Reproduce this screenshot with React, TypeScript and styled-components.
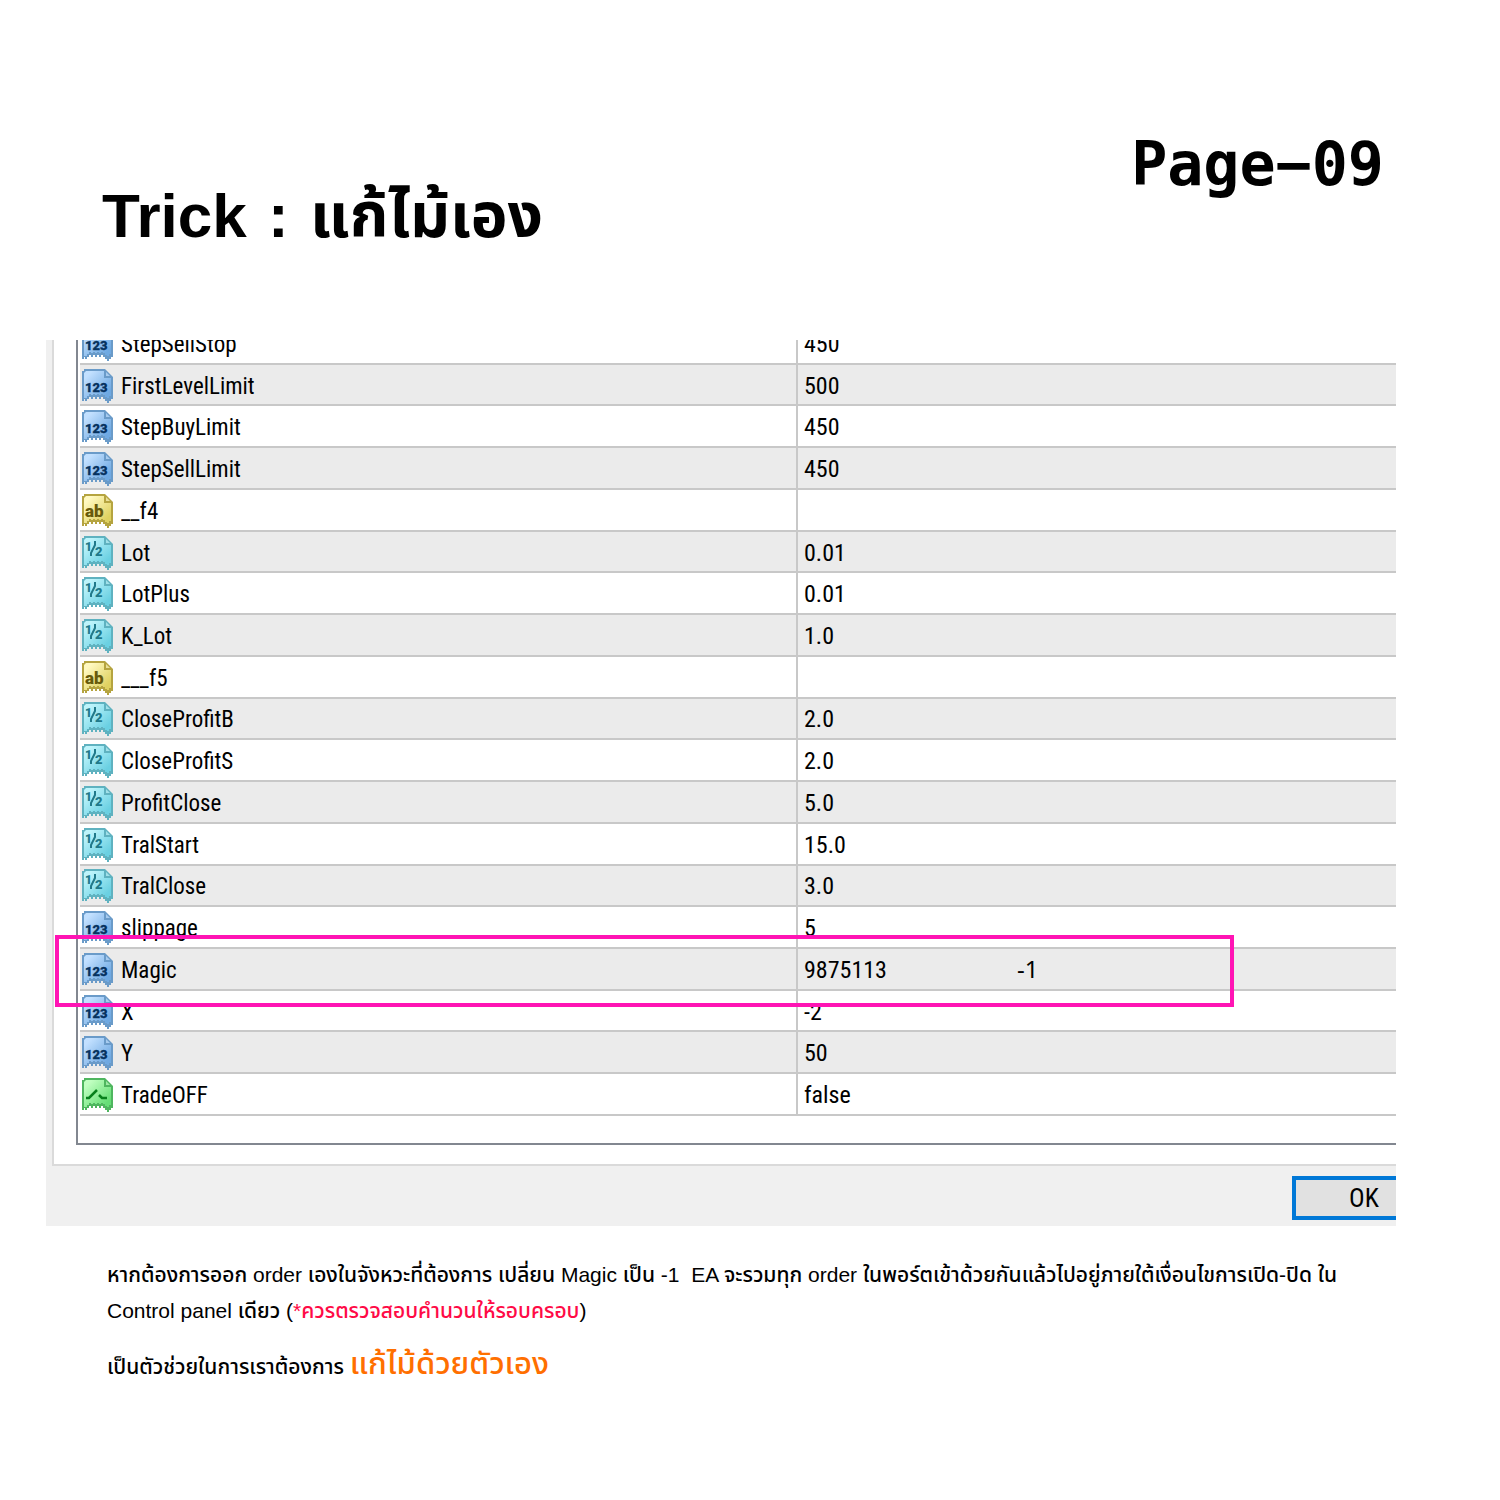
import React from "react";
import styled, { createGlobalStyle } from "styled-components";

const GlobalStyle = createGlobalStyle`
  * { box-sizing: border-box; }
  body {
    margin: 0;
    background: #fff;
    color: #000;
    font-family: "Liberation Sans", "Noto Sans Thai", sans-serif;
  }
`;

const Page = styled.main`
  padding: 120px 104px 96px 46px;
`;

const Header = styled.header`
  display: flex;
  justify-content: space-between;
  align-items: flex-start;
  height: 220px;
  padding: 0 12px 0 56px;
`;

const Title = styled.h1`
  margin: 60px 0 0;
  font-size: 62px;
  line-height: 72px;
  font-weight: 700;
`;

const Colon = styled.span`
  margin: 0 4px;
`;

const PageNumber = styled.p`
  margin: 8px 0 0;
  font-family: "DejaVu Sans Mono", monospace;
  font-size: 60px;
  line-height: 72px;
  font-weight: 700;
`;

const Dialog = styled.section`
  position: relative;
  overflow: hidden;
  background: #f0f0f0;
  padding-left: 6px;
  font-family: "Roboto Condensed", Roboto, sans-serif;
`;

const TabPane = styled.div`
  padding: 0 0 19px 22px;
  background: #fff;
  border-left: 2px solid #dadada;
  border-bottom: 2px solid #dadada;
`;

const ListBox = styled.div`
  overflow: hidden;
  padding: 0 0 27px 2px;
  border-left: 2px solid #828790;
  border-bottom: 2px solid #828790;
`;

const Table = styled.table`
  width: 100%;
  height: 793px;
  margin-top: -17px;
  border-collapse: separate;
  border-spacing: 0;
  table-layout: fixed;
`;

const NameColumn = styled.col`
  width: 718px;
`;

const Row = styled.tr`
  &:nth-child(even) { background: #ebebeb; }
`;

const cellBorder = "2px solid #c8c8c8";

const NameCell = styled.th`
  padding: 2px 0 0 2px;
  border-bottom: ${cellBorder};
  border-right: ${cellBorder};
  font-size: 23px;
  line-height: 32px;
  font-weight: 400;
  text-align: left;
`;

const NameContent = styled.div`
  display: flex;
  align-items: center;
  gap: 8px;
`;

const Name = styled.span`
  padding-top: 2px;
`;

const ValueCell = styled.td`
  padding: 2px 0 0 6px;
  border-bottom: ${cellBorder};
  font-size: 24px;
  line-height: 32px;
`;

const Note = styled.span`
  margin-left: 130px;
  font-family: "Noto Sans", sans-serif;
`;

const Footer = styled.div`
  display: flex;
  justify-content: flex-end;
  padding: 10px 0 6px;
`;

const OkButton = styled.button`
  width: 144px;
  height: 44px;
  margin-right: -40px;
  padding: 0;
  border: 4px solid #0078d7;
  background: #e1e1e1;
  color: #000;
  font-family: inherit;
  font-size: 26px;
  line-height: 32px;
`;

const Highlight = styled.div`
  position: absolute;
  top: 595px;
  left: 9px;
  right: 162px;
  height: 72px;
  border: 4px solid #ff14b4;
  pointer-events: none;
`;

const IconSvg = styled.svg`
  flex: none;
  display: block;
  width: 31px;
  height: 34px;
`;

const Description = styled.div`
  padding: 31px 0 0 61px;
  font-size: 21px;
  line-height: 36px;
  font-weight: 500;
`;

const Paragraph = styled.p`
  margin: 0 0 17px;
`;

const Warning = styled.span`
  color: #ff0a46;
`;

const Emphasis = styled.span`
  color: #ff6f00;
  font-size: 31px;
`;

type Kind = "int" | "string" | "double" | "bool";

const palette: Record<Kind, { light: string; dark: string; edge: string; ink: string }> = {
  int: { light: "#c2e0ff", dark: "#6fa9e2", edge: "#6a9bc9", ink: "#06325f" },
  string: { light: "#fff9c0", dark: "#dfd160", edge: "#b5a440", ink: "#675a0c" },
  double: { light: "#bdf4fb", dark: "#6ad0e2", edge: "#5fb2c0", ink: "#20798a" },
  bool: { light: "#c0ffc0", dark: "#66de76", edge: "#4fb65f", ink: "#08801c" },
};

const IconText = styled.text`
  font-family: Roboto, sans-serif;
  font-weight: 900;
`;

function Mark({ kind, ink }: { kind: Kind; ink: string }) {
  if (kind === "int") return <IconText x="3" y="23" fontSize="13" fill={ink} stroke={ink} strokeWidth="0.3">123</IconText>;
  if (kind === "string") return <IconText x="3" y="23" fontSize="17" fill={ink}>ab</IconText>;
  if (kind === "double")
    return (
      <>
        <IconText x="3" y="15" fontSize="12" fill={ink}>1</IconText>
        <path d="M9 20V17L13 9V5" fill="none" stroke={ink} strokeWidth="2" />
        <IconText x="13" y="20" fontSize="13" fill={ink}>2</IconText>
      </>
    );
  return <path d="M4 20H7L15 12M17 17L20 20H25" fill="none" stroke={ink} strokeWidth="2.5" />;
}

function TypeIcon({ kind }: { kind: Kind }) {
  const c = palette[kind];
  const id = "fill-" + kind;
  return (
    <IconSvg viewBox="0 0 31 34" aria-hidden="true">
      <defs>
        <linearGradient id={id} x1="0" y1="0" x2="1" y2="1">
          <stop offset="0.15" stopColor={c.light} />
          <stop offset="0.85" stopColor={c.dark} />
        </linearGradient>
      </defs>
      <path
        d="M0 2H2V0H23L31 8V30H29V32H27V34H25V32H23V30H21V28H19V30H17V28H15V30H13V28H11V30H9V28H7V30H5V32H3V30H2V32H0Z"
        fill={c.edge}
      />
      <path
        d="M2 4L4 2H22V9H29V27H27V29H25V28H23V26H21V25H19V26H17V25H15V26H13V25H11V26H9V25H7V27H5V29H2Z"
        fill={`url(#${id})`}
      />
      <path d="M24 3L28 7H24Z" fill={c.light} fillOpacity="0.7" />
      <Mark kind={kind} ink={c.ink} />
    </IconSvg>
  );
}

interface Param {
  kind: Kind;
  name: string;
  value: string;
  note?: string;
}

const params: Param[] = [
  { kind: "int", name: "StepSellStop", value: "450" },
  { kind: "int", name: "FirstLevelLimit", value: "500" },
  { kind: "int", name: "StepBuyLimit", value: "450" },
  { kind: "int", name: "StepSellLimit", value: "450" },
  { kind: "string", name: "__f4", value: "" },
  { kind: "double", name: "Lot", value: "0.01" },
  { kind: "double", name: "LotPlus", value: "0.01" },
  { kind: "double", name: "K_Lot", value: "1.0" },
  { kind: "string", name: "___f5", value: "" },
  { kind: "double", name: "CloseProfitB", value: "2.0" },
  { kind: "double", name: "CloseProfitS", value: "2.0" },
  { kind: "double", name: "ProfitClose", value: "5.0" },
  { kind: "double", name: "TralStart", value: "15.0" },
  { kind: "double", name: "TralClose", value: "3.0" },
  { kind: "int", name: "slippage", value: "5" },
  { kind: "int", name: "Magic", value: "9875113", note: "-1" },
  { kind: "int", name: "X", value: "-2" },
  { kind: "int", name: "Y", value: "50" },
  { kind: "bool", name: "TradeOFF", value: "false" },
];

export default function App() {
  return (
    <>
      <GlobalStyle />
      <Page>
        <Header>
          <Title>
            Trick <Colon>:</Colon> แก้ไม้เอง
          </Title>
          <PageNumber>Page−09</PageNumber>
        </Header>

        <Dialog>
          <TabPane>
            <ListBox>
              <Table>
                <colgroup>
                  <NameColumn />
                  <col />
                </colgroup>
                <tbody>
                  {params.map((p) => (
                    <Row key={p.name}>
                      <NameCell scope="row">
                        <NameContent>
                          <TypeIcon kind={p.kind} />
                          <Name>{p.name}</Name>
                        </NameContent>
                      </NameCell>
                      <ValueCell>
                        {p.value}
                        {p.note && <Note>{p.note}</Note>}
                      </ValueCell>
                    </Row>
                  ))}
                </tbody>
              </Table>
            </ListBox>
          </TabPane>
          <Footer>
            <OkButton type="button">OK</OkButton>
          </Footer>
          <Highlight />
        </Dialog>

        <Description>
          <Paragraph>
            หากต้องการออก order เองในจังหวะที่ต้องการ เปลี่ยน Magic เป็น -1 &nbsp;EA จะรวมทุก order
            ในพอร์ตเข้าด้วยกันแล้วไปอยู่ภายใต้เงื่อนไขการเปิด-ปิด ใน
            <br />
            Control panel เดียว (<Warning>*ควรตรวจสอบคำนวนให้รอบครอบ</Warning>)
          </Paragraph>
          <Paragraph>
            เป็นตัวช่วยในการเราต้องการ <Emphasis>แก้ไม้ด้วยตัวเอง</Emphasis>
          </Paragraph>
        </Description>
      </Page>
    </>
  );
}
